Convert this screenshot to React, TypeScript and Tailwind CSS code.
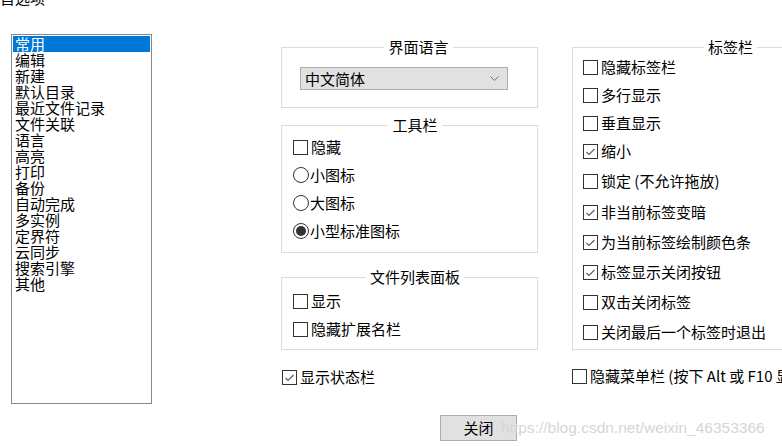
import React from "react"

const categories = [
  "常用",
  "编辑",
  "新建",
  "默认目录",
  "最近文件记录",
  "文件关联",
  "语言",
  "高亮",
  "打印",
  "备份",
  "自动完成",
  "多实例",
  "定界符",
  "云同步",
  "搜索引擎",
  "其他",
]

const tabOptions = [
  { label: "隐藏标签栏", checked: false, h: "h-[28px]" },
  { label: "多行显示", checked: false, h: "h-[28px]" },
  { label: "垂直显示", checked: false, h: "h-[28px]" },
  { label: "缩小", checked: true, h: "h-[28px]" },
  { label: "锁定 (不允许拖放)", checked: false, h: "h-[32px]" },
  { label: "非当前标签变暗", checked: true, h: "h-[30px]" },
  { label: "为当前标签绘制颜色条", checked: true, h: "h-[30px]" },
  { label: "标签显示关闭按钮", checked: true, h: "h-[30px]" },
  { label: "双击关闭标签", checked: false, h: "h-[30px]" },
  { label: "关闭最后一个标签时退出", checked: false, h: "h-[30px]" },
]

function Box({ checked }: { checked?: boolean }) {
  return (
    <span className="flex h-[15px] w-[15px] shrink-0 items-center justify-center border border-[#333] bg-white">
      {checked && (
        <svg width="13" height="13" viewBox="0 0 13 13">
          <path d="M2.5 7 L5 9.5 L10.5 4" fill="none" stroke="#5a5a5a" strokeWidth="1.1" />
        </svg>
      )}
    </span>
  )
}

function Check({ label, checked, h = "h-[28px]" }: { label: string; checked?: boolean; h?: string }) {
  return (
    <div className={`flex items-center whitespace-nowrap ${h}`}>
      <Box checked={checked} />
      <span className="ml-[3px]">{label}</span>
    </div>
  )
}

function Radio({ label, checked }: { label: string; checked?: boolean }) {
  return (
    <div className="flex h-[28px] items-center">
      <span className="flex h-[16px] w-[16px] shrink-0 items-center justify-center rounded-full border border-[#333] bg-white">
        {checked && <span className="h-[10px] w-[10px] rounded-full bg-[#333]" />}
      </span>
      <span className="ml-[1px]">{label}</span>
    </div>
  )
}

function Group({ title, className, children }: { title: string; className: string; children: React.ReactNode }) {
  return (
    <fieldset className={`border border-[#dcdcdc] ${className}`}>
      <legend className="mx-auto px-[4px] leading-[16px]">{title}</legend>
      {children}
    </fieldset>
  )
}

export default function App() {
  return (
    <div className="relative h-[446px] w-[782px] overflow-hidden bg-white font-['Noto_Sans_CJK_SC',sans-serif] text-[15px] leading-[16px] text-black">
      <div className="flex items-start">
        {/* category list */}
        <div className="flex w-[281px] shrink-0 flex-col">
          <div className="-mt-[10px] h-[16px]">首选项</div>
          <div className="ml-[11px] mt-[28px] h-[370px] w-[141px] border border-[#828790] p-[1px]">
            {categories.map((c, i) => (
              <div
                key={c}
                className={`h-[16px] pl-[2px] leading-[16px] ${i === 0 ? "bg-[#0078d7] text-white" : ""}`}
              >
                {c}
              </div>
            ))}
          </div>
        </div>

        {/* middle column */}
        <div className="flex w-[257px] shrink-0 flex-col pt-[39px]">
          <Group title="界面语言" className="pb-[17px] pl-[18px] pt-[12px]">
            <div className="flex h-[23px] w-[208px] items-center justify-between border border-[#adadad] bg-[#e1e1e1] pl-[4px] pr-[8px]">
              <span>中文简体</span>
              <svg width="9" height="5" viewBox="0 0 9 5">
                <path d="M0.5 0.5 L4.5 4.5 L8.5 0.5" fill="none" stroke="#707070" strokeWidth="1" />
              </svg>
            </div>
          </Group>

          <Group title="工具栏" className="mt-[9px] pb-[7px] pl-[11px]">
            <Check label="隐藏" />
            <Radio label="小图标" />
            <Radio label="大图标" />
            <Radio label="小型标准图标" checked />
          </Group>

          <Group title="文件列表面板" className="mt-[16px] pb-[6px] pl-[11px] pt-[2px]">
            <Check label="显示" />
            <Check label="隐藏扩展名栏" />
          </Group>

          <div className="ml-[1px] mt-[13px]">
            <Check label="显示状态栏" checked />
          </div>

          <button className="ml-[159px] mt-[24px] flex h-[26px] w-[77px] items-center justify-center border border-[#adadad] bg-[#e1e1e1]">
            关闭
          </button>
        </div>

        {/* tab bar options */}
        <div className="ml-[34px] flex w-[307px] shrink-0 flex-col pt-[39px]">
          <Group title="标签栏" className="pb-[2px] pl-[10px]">
            <div className="-mt-[2px]">
              {tabOptions.map((o) => (
                <Check key={o.label} label={o.label} checked={o.checked} h={o.h} />
              ))}
            </div>
          </Group>
          <div className="mt-[12px]">
            <Check label="隐藏菜单栏 (按下 Alt 或 F10 显示)" />
          </div>
        </div>
      </div>

      {/* watermark */}
      <div className="pointer-events-none absolute left-[501px] top-[418px] whitespace-nowrap font-['Liberation_Sans',sans-serif] text-[15.5px] leading-[20px] text-[#d6d6d6]">
        https://blog.csdn.net/weixin_46353366
      </div>
    </div>
  )
}
